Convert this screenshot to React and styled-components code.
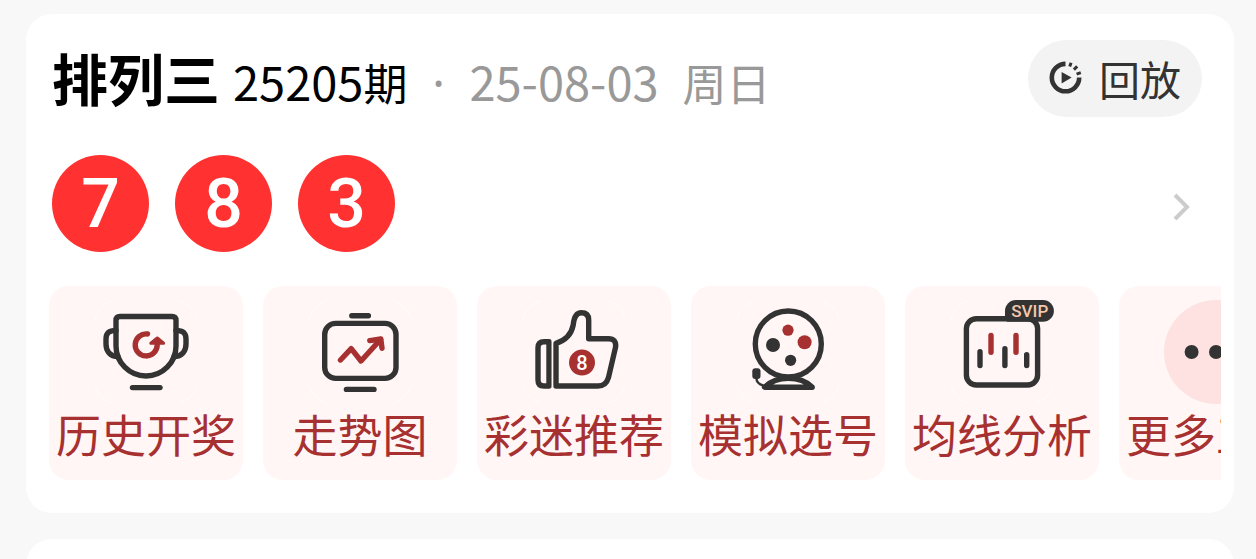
import styled, { createGlobalStyle } from "styled-components";

import React from "react";

const GlobalStyle = createGlobalStyle`
  :root {
    --page: #f8f8f8;
    --ink: #333333;
    --muted: #999999;
    --ball: #ff3131;
    --accent: #a73030;
    --tile: #fff6f5;
  }

  * {
    box-sizing: border-box;
  }

  body {
    margin: 0;
    background: var(--page);
    font-family: "Noto Sans CJK SC", sans-serif;
  }

  button {
    border: none;
    font-family: inherit;
    cursor: pointer;
  }
`;

const Page = styled.main`
  display: flex;
  flex-direction: column;
  gap: 26px;
  height: 100vh;
  padding: 14px 22px 0 26px;
  overflow: hidden;
`;

const Card = styled.section`
  flex: none;
  min-height: 200px;
  padding-bottom: 33px;
  border-radius: 26px;
  background: white;
`;

const Header = styled.header`
  display: flex;
  justify-content: space-between;
  align-items: flex-start;
  padding: 26px 32px 0 26px;
`;

const Heading = styled.div`
  display: flex;
  align-items: baseline;
  height: 77px;
  font-size: 47px;
  line-height: 74px;
  white-space: nowrap;

  h1 {
    margin: 0 13px 0 0;
    font-size: 56px;
    font-weight: 700;
    line-height: 74px;
  }
`;

const Unit = styled.span`
  font-size: 44px;
`;

const Dot = styled.span`
  width: 62px;
  color: var(--muted);
  font-family: "Noto Sans", sans-serif;
  text-align: center;
`;

const DrawDate = styled.time`
  display: flex;
  align-items: baseline;
  gap: 24px;
  color: var(--muted);
`;

const ReplayButton = styled.button`
  display: flex;
  align-items: center;
  gap: 17px;
  height: 77px;
  padding: 0 21px 2px;
  border-radius: 39px;
  background: #f3f3f3;
  color: var(--ink);
  font-size: 41px;
  line-height: 60px;
`;

const ResultRow = styled.div`
  display: flex;
  justify-content: space-between;
  align-items: center;
  padding: 38px 43px 34px 26px;
`;

const Balls = styled.div`
  display: flex;
  gap: 26px;
`;

const Ball = styled.span`
  display: flex;
  justify-content: center;
  align-items: center;
  width: 97px;
  height: 97px;
  border-radius: 50%;
  background: var(--ball);
  color: white;
  font-family: Roboto, sans-serif;
  font-size: 68px;
  font-weight: 500;
  line-height: 98px;
`;

const MoreButton = styled.button`
  display: flex;
  padding: 6px 0 0;
  background: none;
`;

const Tools = styled.nav`
  display: flex;
  gap: 20px;
  margin: 0 13px 0 23px;
  overflow-x: auto;
  scrollbar-width: none;
`;

const Tool = styled.button`
  display: flex;
  flex: none;
  flex-direction: column;
  align-items: center;
  width: 194px;
  height: 194px;
  padding: 14px 0 0;
  border-radius: 20px;
  background: var(--tile);
  color: var(--accent);
  font-size: 45px;
  line-height: 60px;
  white-space: nowrap;
`;

const Drawing = styled.svg`
  display: block;
  flex: none;
  fill: none;
  stroke: var(--ink);
  stroke-width: 5.4;
  stroke-linecap: round;
  stroke-linejoin: round;

  .red {
    stroke: var(--accent);
  }
  .solid {
    fill: var(--ink);
    stroke: none;
  }
  .redSolid {
    fill: var(--accent);
    stroke: none;
  }
  .corner {
    stroke: white;
    stroke-width: 1;
    opacity: 0.8;
  }
  .arrowHead {
    fill: var(--accent);
    stroke: var(--accent);
    stroke-width: 3;
  }
  .slit {
    stroke: var(--tile);
    stroke-width: 1.3;
    stroke-linecap: butt;
  }
  .wire {
    stroke-width: 2.4;
  }
  .disc {
    fill: #fee2e2;
    stroke: none;
  }
  .ring {
    stroke-width: 4.6;
    stroke-linecap: butt;
  }
  .ticks {
    stroke-width: 3;
    stroke-linecap: butt;
  }
  .chevron {
    stroke: #cccccc;
    stroke-width: 4;
    stroke-linecap: butt;
    stroke-linejoin: miter;
  }
  text {
    stroke: none;
    font-family: Roboto, sans-serif;
    text-anchor: middle;
  }
`;

const ToolIcon = ({ children }) => (
  <Drawing width="104" height="104" viewBox="0 0 104 104" aria-hidden="true">
    <path
      className="corner"
      d="M1 20Q4 5 18 1M86 1Q99 5 103 18M103 86Q99 99 86 103M18 103Q5 99 1 86"
    />
    {children}
  </Drawing>
);

const TrophyIcon = () => (
  <ToolIcon>
    <path d="M26 16.5H78Q82 16.5 82 20.5V46A30 30 0 0 1 22 46V20.5Q22 16.5 26 16.5Z" />
    <path d="M22 30.5C15 30.5 12 33 12 39V44C12 51 16 56.5 24 56.5" />
    <path d="M82 30.5C89 30.5 92 33 92 39V44C92 51 88 56.5 80 56.5" />
    <path d="M38.5 87.6H66" />
    <path className="red" d="M53.5 34A11 11 0 1 0 63.2 45" />
    <path className="arrowHead" d="M63.3 38L56.8 43.2H69.6Z" />
  </ToolIcon>
);

const TrendIcon = () => (
  <ToolIcon>
    <rect x="16.7" y="23.4" width="71.3" height="55" rx="11" />
    <path d="M43.8 15.7H60.4M38.4 89.4H66" />
    <path className="red" d="M32.5 60L43.2 48.6L53 61L72.5 39.5" />
    <path className="red" d="M61.8 40.6L72.8 39L74 48.2" />
  </ToolIcon>
);

const ThumbIcon = () => (
  <ToolIcon>
    <path d="M27 41.7H22Q16 41.7 16 47.7V80Q16 86 22 86H27Z" />
    <path d="M34 86V43.3C43 40.5 49.5 34 51.2 25C52 17 54 12.8 59.3 12.8Q66.7 12.8 66.7 20V38.7H86.5Q94.5 38.7 93.6 47L86.5 77.5Q84 86 76 86Z" />
    <path className="slit" d="M30.4 38V90" />
    <circle className="redSolid" cx="60" cy="62.6" r="13" />
    <text x="60" y="69.6" fill="white" fontSize="20" fontWeight="500">
      8
    </text>
  </ToolIcon>
);

const MachineIcon = () => (
  <ToolIcon>
    <circle cx="52.3" cy="44" r="33" />
    <circle className="redSolid" cx="52" cy="30.2" r="5.6" />
    <circle className="redSolid" cx="68.6" cy="42.3" r="7" />
    <circle className="solid" cx="37" cy="45" r="7" />
    <circle className="solid" cx="54.6" cy="60.3" r="5.6" />
    <path d="M28.6 87.2H76.2C70 81 62 78.3 52.4 78.3C43 78.3 35 81 28.6 87.2Z" />
    <rect className="solid" x="16.3" y="68.3" width="8.2" height="10.6" rx="3" />
    <path className="wire" d="M20.4 78C20.4 82 22 84 27 85.5" />
  </ToolIcon>
);

const AverageIcon = () => (
  <ToolIcon>
    <rect x="16.4" y="18.7" width="71.2" height="66.3" rx="10" />
    <path d="M30 51.8V65.6M54.9 48.8V65.6M76.7 54.6V65.6" />
    <path className="red" d="M41 35.4V52.2M66 35.4V52.2" />
    <path
      className="solid"
      d="M66 0H93A10.9 10.9 0 0 1 93 21.8H58Q55 21.8 55 18V11A11 11 0 0 1 66 0Z"
    />
    <text x="79.8" y="17.2" fill="#f3c7ab" fontSize="17" fontWeight="500">
      SVIP
    </text>
  </ToolIcon>
);

const MoreIcon = () => (
  <Drawing width="104" height="104" viewBox="0 0 104 104" aria-hidden="true">
    <circle className="disc" cx="52" cy="52" r="52" />
    <circle className="solid" cx="27.6" cy="52" r="7" />
    <circle className="solid" cx="52" cy="52" r="7" />
    <circle className="solid" cx="76.4" cy="52" r="7" />
  </Drawing>
);

const ReplayIcon = () => (
  <Drawing width="33" height="33" viewBox="0 0 33 33" aria-hidden="true">
    <path className="ring" d="M16.5 2.9A13.7 13.7 0 1 0 30.2 16.6" />
    <path
      className="ticks"
      d="M20.7 5.6L22.1 1.8M24.9 8.6L28.2 5.4M27.6 13.1L31.8 11.6"
    />
    <path className="solid" d="M12.6 11L22.6 16.6L12.6 22.4Z" />
  </Drawing>
);

const ArrowIcon = () => (
  <Drawing width="20" height="28" viewBox="0 0 20 28" aria-hidden="true">
    <path className="chevron" d="M4 2L16 14L4 26" />
  </Drawing>
);

const numbers = [7, 8, 3];

const tools = [
  { label: "历史开奖", Icon: TrophyIcon },
  { label: "走势图", Icon: TrendIcon },
  { label: "彩迷推荐", Icon: ThumbIcon },
  { label: "模拟选号", Icon: MachineIcon },
  { label: "均线分析", Icon: AverageIcon },
  { label: "更多工具", Icon: MoreIcon },
];

export default function App() {
  return (
    <Page>
      <GlobalStyle />
      <Card>
        <Header>
          <Heading>
            <h1>排列三</h1>
            <span>
              25205<Unit>期</Unit>
            </span>
            <Dot>·</Dot>
            <DrawDate dateTime="2025-08-03">
              <span>25-08-03</span>
              <Unit>周日</Unit>
            </DrawDate>
          </Heading>
          <ReplayButton type="button">
            <ReplayIcon />
            回放
          </ReplayButton>
        </Header>
        <ResultRow>
          <Balls>
            {numbers.map((number) => (
              <Ball key={number}>{number}</Ball>
            ))}
          </Balls>
          <MoreButton type="button" aria-label="开奖详情">
            <ArrowIcon />
          </MoreButton>
        </ResultRow>
        <Tools>
          {tools.map(({ label, Icon }) => (
            <Tool type="button" key={label}>
              <Icon />
              {label}
            </Tool>
          ))}
        </Tools>
      </Card>
      <Card />
    </Page>
  );
}
